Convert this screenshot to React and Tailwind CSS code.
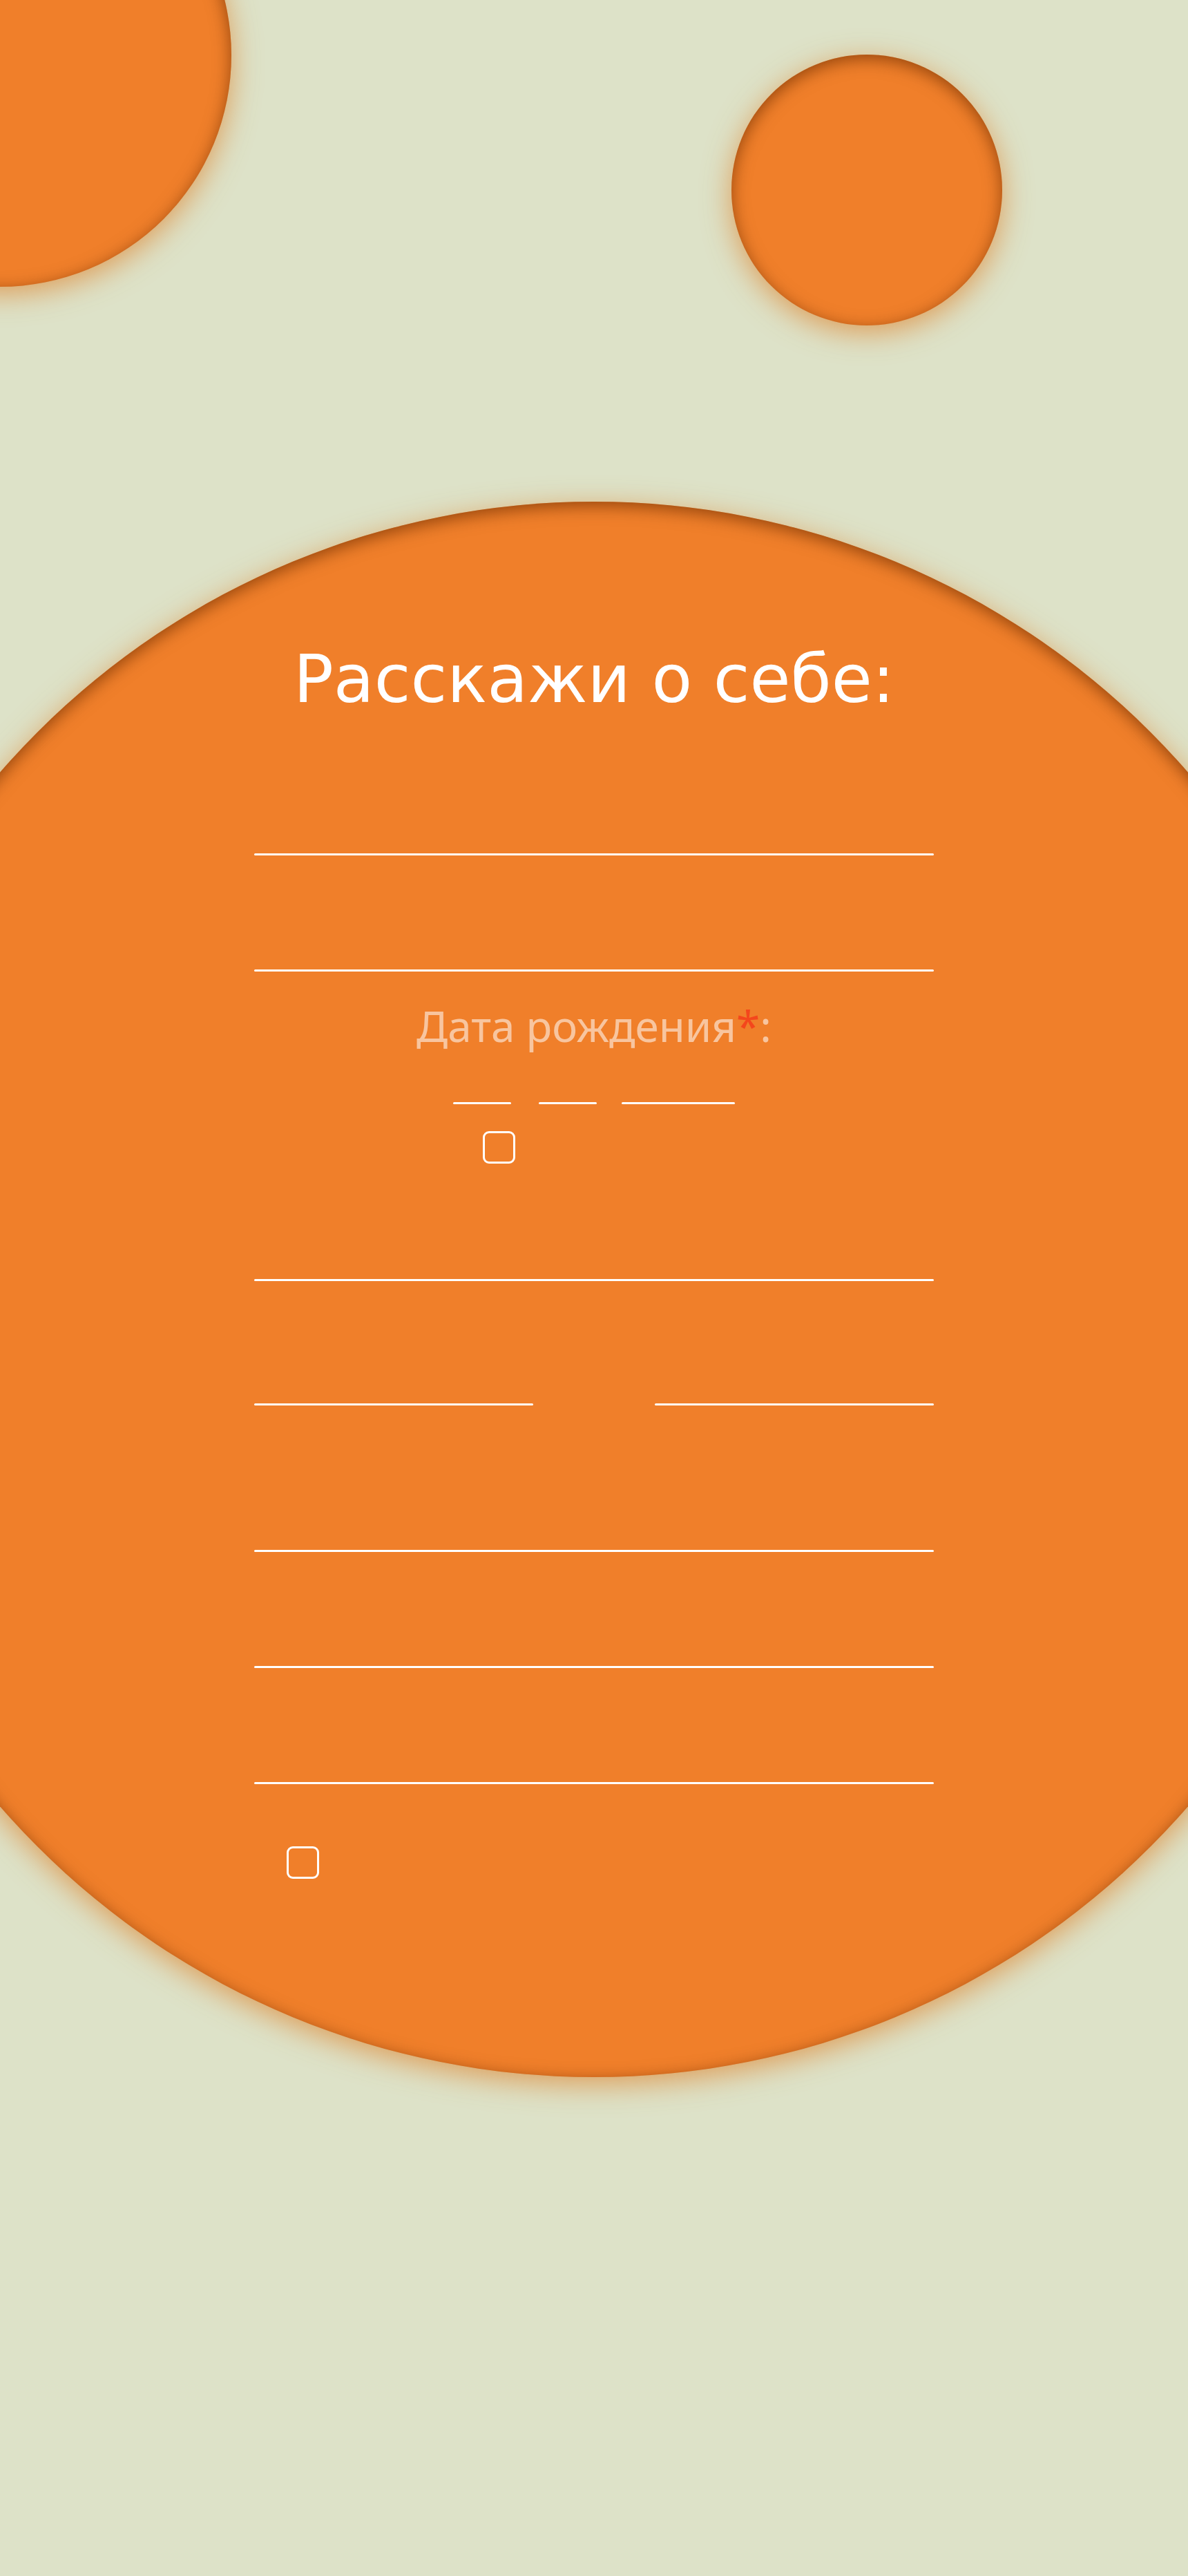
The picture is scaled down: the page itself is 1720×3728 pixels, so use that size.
import React from 'react'

const bubble =
  'rounded-full bg-[#f07f2a] shadow-[inset_0_6px_24px_rgba(110,45,0,0.7),0_10px_42px_rgba(222,140,60,0.8)]'

const Line = ({ className = '' }) => (
  <div className={`h-[3px] bg-white rounded-full ${className}`} />
)

const Checkbox = ({ className = '' }) => (
  <div className={`w-[47px] h-[47px] shrink-0 rounded-[9px] border-[3px] border-white ${className}`} />
)

export default function App() {
  return (
    <div className="relative h-[3728px] overflow-hidden bg-[#dde2c8] font-['DejaVu_Sans',sans-serif]">
      {/* decorative bubbles */}
      <div className={`absolute -left-[335px] -top-[255px] w-[670px] h-[670px] ${bubble}`} />
      <div className={`absolute left-[1059px] top-[79px] w-[392px] h-[392px] ${bubble}`} />

      <div className="flex justify-center pt-[726px]">
        <div className={`w-[2280px] h-[2280px] shrink-0 flex flex-col items-center ${bubble}`}>
          <form className="w-[984px] flex flex-col pt-[209px]">
            <h1 className="text-white text-[96px] leading-none text-center font-normal">
              Расскажи о себе:
            </h1>

            <Line className="mt-[204px]" />
            <Line className="mt-[165px]" />

            <p className="mt-[47px] text-center text-[62px] leading-none text-white/55 font-['Noto_Sans',sans-serif]">
              Дата рождения<span className="text-[#f4471c]">*</span>:
            </p>

            <div className="mt-[80px] flex justify-center">
              <Line className="w-[84px]" />
              <Line className="w-[84px] ml-[40px]" />
              <Line className="w-[164px] ml-[36px]" />
            </div>

            <div className="mt-[39px] flex justify-center gap-3">
              <Checkbox />
              <span className="w-[264px]" />
            </div>

            <Line className="mt-[167px]" />

            <div className="mt-[177px] flex justify-between">
              <Line className="w-[404px]" />
              <Line className="w-[404px]" />
            </div>

            <Line className="mt-[209px]" />
            <Line className="mt-[165px]" />
            <Line className="mt-[165px]" />

            <div className="mt-[90px] flex items-center gap-3">
              <Checkbox className="ml-[47px]" />
            </div>
          </form>
        </div>
      </div>
    </div>
  )
}
